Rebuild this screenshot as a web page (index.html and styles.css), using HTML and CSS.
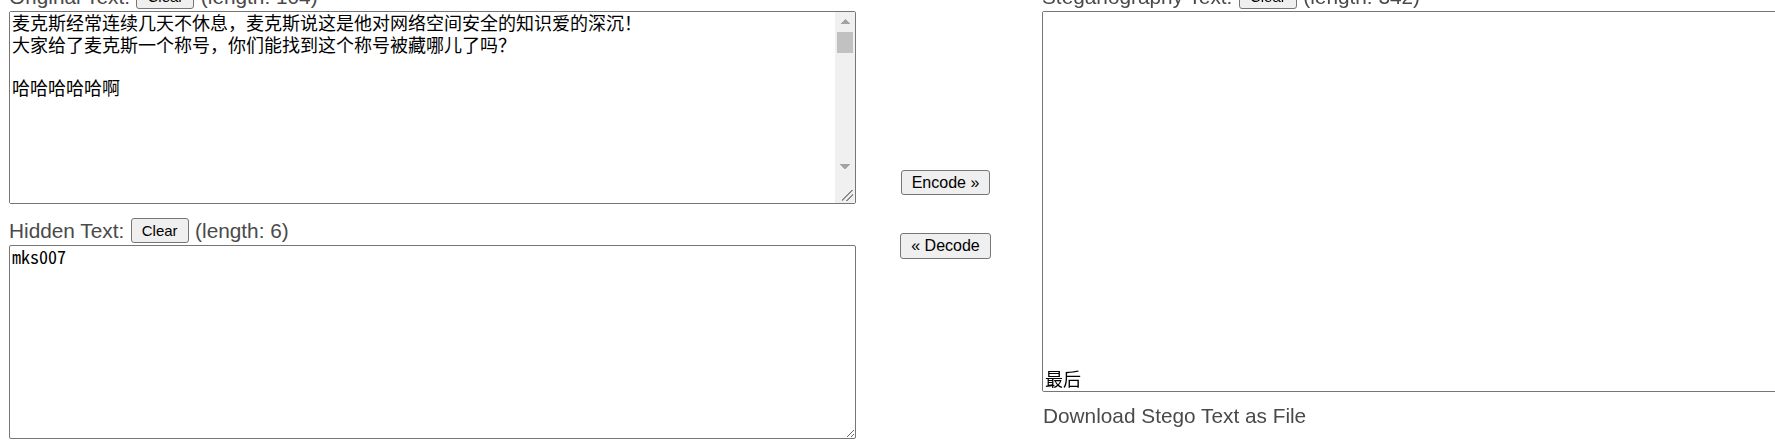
FILE: index.html
```html
<!DOCTYPE html>
<html>
<head>
  <meta charset="utf-8">
  <title>Text Steganography</title>
  <link rel="stylesheet" href="styles.css">
</head>
<body>
  <div class="page">
    <div class="column left-col">
      <div class="field">
        <div class="field-head">
          <span class="field-name">Original Text:</span>
          <button type="button">Clear</button>
          <span class="field-len">(length: 104)</span>
        </div>
        <div class="box-frame">
          <textarea class="box box-original">麦克斯经常连续几天不休息，麦克斯说这是他对网络空间安全的知识爱的深沉！
大家给了麦克斯一个称号，你们能找到这个称号被藏哪儿了吗？

哈哈哈哈哈啊</textarea>
          <div class="scrollbar" aria-hidden="true">
            <span class="sb-btn sb-up"></span>
            <span class="sb-track"><span class="sb-thumb"></span></span>
            <span class="sb-btn sb-down"></span>
            <span class="sb-corner"></span>
          </div>
        </div>
      </div>
      <div class="field">
        <div class="field-head">
          <span class="field-name">Hidden Text:</span>
          <button type="button">Clear</button>
          <span class="field-len">(length: 6)</span>
        </div>
        <textarea class="box box-hidden">mks007</textarea>
      </div>
    </div>

    <div class="actions">
      <button type="button" class="convert">Encode &raquo;</button>
      <button type="button" class="convert">&laquo; Decode</button>
    </div>

    <div class="column right-col">
      <div class="field-head">
        <span class="field-name">Steganography Text:</span>
        <button type="button">Clear</button>
        <span class="field-len">(length: 342)</span>
      </div>
      <textarea class="box box-stego scroll-end">

























最后</textarea>
      <a class="download" href="#">Download Stego Text as File</a>
    </div>
  </div>
  <script src="script.js"></script>
</body>
</html>
```

FILE: styles.css
```css
/* Page basics */
html {
  overflow: hidden;
}

body {
  margin: 0;
  font-family: "Liberation Sans", Arial, sans-serif;
  color: #4a4a4a;
}

/* Three columns: original/hidden, buttons, stego */
.page {
  display: flex;
  align-items: flex-start;
  margin-top: -16px;
  padding-left: 9px;
}

.left-col {
  width: 847px;
  flex-shrink: 0;
}

.right-col {
  width: 760px;
  flex-shrink: 0;
}

/* Label row above each box */
.field-head {
  display: flex;
  align-items: center;
  gap: 6.5px;
  height: 25px;
  margin-bottom: 2px;
  font-size: 20.8px;
  white-space: nowrap;
}

.field + .field {
  margin-top: 14px;
}

/* Buttons */
button {
  font-family: "Liberation Sans", Arial, sans-serif;
  font-size: 15px;
  color: #000;
  background-color: #efefef;
  border: 1px solid #767676;
  border-radius: 3px;
  height: 25px;
  padding: 0 10px;
  margin: 0;
}

.actions {
  width: 186px;
  flex-shrink: 0;
  align-self: center;
  display: flex;
  flex-direction: column;
  align-items: center;
  gap: 38px;
  padding: 6px 7px 0 0;
  box-sizing: border-box;
}

.convert {
  font-size: 16px;
  padding: 0 10px;
}

.convert + .convert {
  height: 26px;
}

/* Text boxes */
.box {
  display: block;
  box-sizing: border-box;
  width: 100%;
  margin: 0;
  padding: 0 2px 2px;
  border: 1px solid #767676;
  border-radius: 2px;
  font-family: "Noto Sans Mono CJK SC", "Noto Sans CJK SC", monospace;
  font-size: 18px;
  line-height: 21.5px;
  color: #000;
  background: #fff;
}

.box-hidden {
  height: 194px;
}

.box-stego {
  height: 381px;
  padding-bottom: 0;
}

/* The original text box carries a classic scrollbar */
.box-frame {
  display: flex;
  height: 193px;
  box-sizing: border-box;
  border: 1px solid #767676;
  border-radius: 2px;
  background: #fff;
}

.box-frame .box {
  flex: 1;
  width: auto;
  height: 100%;
  border: none;
  border-radius: 0;
  resize: none;
  overflow: hidden;
}

.scrollbar {
  width: 20px;
  flex-shrink: 0;
  display: flex;
  flex-direction: column;
  background: #f0f0f0;
}

.sb-btn {
  display: block;
  height: 19px;
  background-repeat: no-repeat;
  background-position: center;
  background-size: 10px 5px;
}

.sb-up {
  background-image: conic-gradient(from 135deg at 50% 0, #a3a3a3 90deg, transparent 0);
}

.sb-down {
  background-image: conic-gradient(from -45deg at 50% 100%, #a3a3a3 90deg, transparent 0);
}

.sb-track {
  flex: 1;
  padding-top: 1px;
}

.sb-thumb {
  display: block;
  height: 21px;
  margin: 0 2px;
  background: #c1c1c1;
}

.sb-corner {
  display: block;
  height: 27px;
  background: linear-gradient(135deg, transparent 42%, #8a8a8a 42% 50%, transparent 50% 66%, #8a8a8a 66% 74%, transparent 74%) no-repeat right 2px bottom 2px / 11px 11px;
}

/* Download link under the stego box */
.download {
  display: block;
  margin-top: 12px;
  padding-left: 1px;
  font-size: 20.8px;
  color: #4a4a4a;
  text-decoration: none;
}
```

FILE: script.js
```js
// show the end of the stego text, like after encoding
document.querySelectorAll('.scroll-end').forEach(function (box) {
  box.scrollTop = box.scrollHeight;
});
```
